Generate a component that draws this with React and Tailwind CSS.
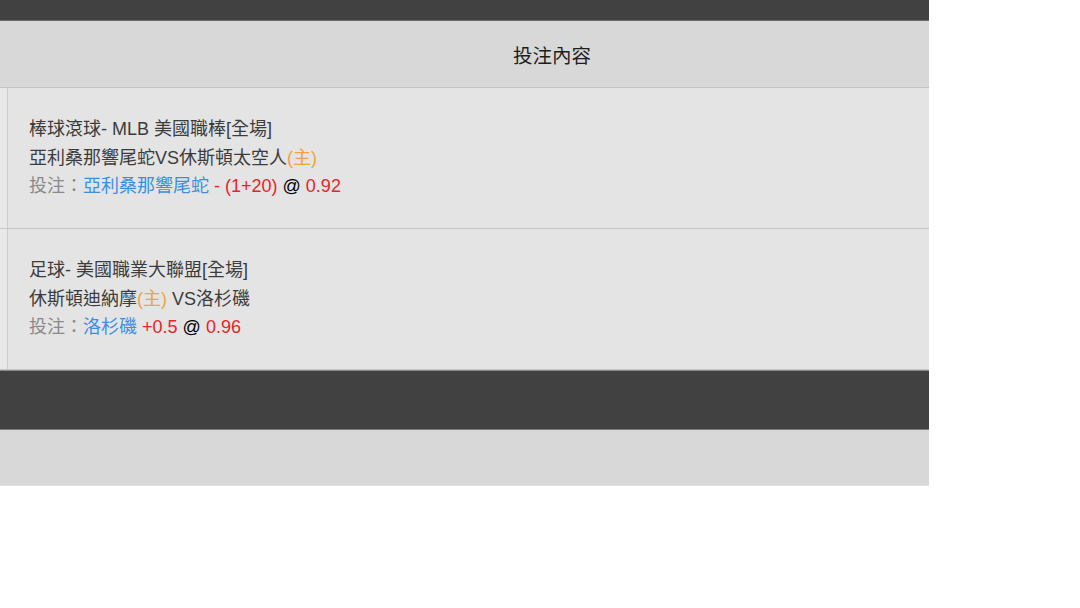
import React from "react";

const bets = [
  {
    league: "棒球滾球- MLB 美國職棒[全場]",
    home: "休斯頓太空人",
    away: "亞利桑那響尾蛇",
    homeFirst: false,
    pick: "亞利桑那響尾蛇",
    line: "- (1+20)",
    odds: "0.92",
  },
  {
    league: "足球- 美國職業大聯盟[全場]",
    home: "休斯頓迪納摩",
    away: "洛杉磯",
    homeFirst: true,
    pick: "洛杉磯",
    line: "+0.5",
    odds: "0.96",
  },
];

function BetRow({ bet }) {
  return (
    <div className="flex h-[141px] border-b border-[#c6c6c6] bg-[#e4e4e4]">
      {/* narrow left cell */}
      <div className="w-[8px] shrink-0 border-r border-[#cdcdcd] bg-[#e8e8e8]" />
      <div className="flex flex-1 flex-col justify-center pl-[21px] text-[18px] leading-[28.5px] text-[#3c3c3c]">
        <div>{bet.league}</div>
        {bet.homeFirst ? (
          <div>
            {bet.home}
            <span className="text-[#f0a245]">(主)</span> VS{bet.away}
          </div>
        ) : (
          <div>
            {bet.away}VS{bet.home}
            <span className="text-[#f0a245]">(主)</span>
          </div>
        )}
        <div className="text-[#8a8a8a]">
          投注：<span className="text-[#3b8fe0]">{bet.pick}</span>{" "}
          <span className="text-[#e2262c]">{bet.line}</span>{" "}
          <span className="text-black">@</span>{" "}
          <span className="text-[#e2262c]">{bet.odds}</span>
        </div>
      </div>
    </div>
  );
}

export default function App() {
  return (
    <div
      className="h-[608px] w-[1080px] bg-white"
      style={{ fontFamily: '"Liberation Sans", "Noto Sans CJK TC", sans-serif' }}
    >
      <div className="w-[929px]">
        <div className="h-[21px] border-b border-[#6e6e6e] bg-[#414141]" />
        <div className="flex h-[67px] items-center justify-center border-b border-[#c2c2c2] bg-[#d8d8d8] pl-[175px] pt-[6px] text-[19.5px] text-[#1e1e1e]">
          投注內容
        </div>
        {bets.map((b, i) => (
          <BetRow key={i} bet={b} />
        ))}
        <div className="h-[59px] border-t border-[#8a8a8a] bg-[#414141]" />
        <div className="h-[57px] border-t border-[#7a7a7a] border-b border-b-[#e2e2e2] bg-[#d8d8d8]" />
      </div>
    </div>
  );
}
